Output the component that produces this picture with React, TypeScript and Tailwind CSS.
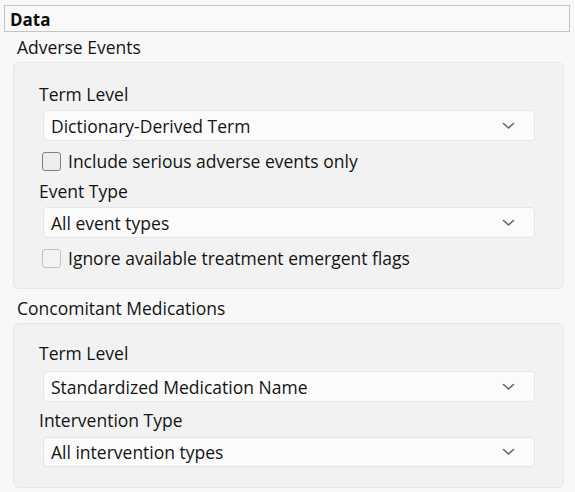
import React from "react";

const font = { fontFamily: '"Open Sans", "Noto Sans", sans-serif' };

function Chevron() {
  return (
    <svg width="13" height="8" viewBox="0 0 13 8" className="shrink-0">
      <path d="M1.5 1.5 L6.5 6 L11.5 1.5" fill="none" stroke="#666666" strokeWidth="1.6" strokeLinecap="round" strokeLinejoin="round" />
    </svg>
  );
}

function Select({ value, h = "h-[31px]" }: { value: string; h?: string }) {
  return (
    <div className={`ml-[29px] mr-[28px] ${h} rounded-[4px] border border-[#e6e6e6] bg-[#fbfbfb] flex items-center justify-between pl-[7px] pr-[19px]`}>
      <span className="text-[17.5px] text-[#141414] leading-none pt-[2px]">{value}</span>
      <Chevron />
    </div>
  );
}

function Label({ text }: { text: string }) {
  return (
    <div className="ml-[25px] h-[20px] flex items-center">
      <span className="text-[17.5px] text-[#141414] leading-none pt-[2px]">{text}</span>
    </div>
  );
}

function Check({ text, disabled }: { text: string; disabled?: boolean }) {
  return (
    <div className="ml-[28px] h-[20px] flex items-center gap-[7px]">
      <div
        className={`w-[19px] h-[19px] rounded-[3px] ${
          disabled ? "border border-[#c2c2c2] bg-[#f3f3f3]" : "border-[1.5px] border-[#808080] bg-[#ededed]"
        }`}
      />
      <span className="text-[17.5px] text-[#141414] leading-none pt-[2px]">{text}</span>
    </div>
  );
}

export default function App() {
  return (
    <div className="w-[575px] h-[492px] bg-[#f8f8f8] overflow-hidden pt-[5px]" style={font}>
      <div className="mx-[4px] w-[566px] h-[27px] border border-[#c4c4c4] bg-[#f9f9f9] flex items-center pl-[5px]">
        <span className="text-[17px] font-bold text-[#0d0d0d] leading-none pt-[2px]">Data</span>
      </div>
      <div className="ml-[17px] mt-[4px] h-[20px] flex items-center">
        <span className="text-[17.5px] text-[#141414] leading-none pt-[3px]">Adverse Events</span>
      </div>
      <div className="ml-[13px] mt-[6px] w-[551px] h-[227px] rounded-[6px] border border-[#e7e7e7] bg-[#f2f2f2] pt-[21px] flex flex-col">
        <Label text="Term Level" />
        <div className="mt-[6px]"><Select value="Dictionary-Derived Term" /></div>
        <div className="mt-[10px]"><Check text="Include serious adverse events only" /></div>
        <div className="mt-[10px]"><Label text="Event Type" /></div>
        <div className="mt-[6px]"><Select value="All event types" /></div>
        <div className="mt-[10px]"><Check text="Ignore available treatment emergent flags" disabled /></div>
      </div>
      <div className="ml-[17px] mt-[9px] h-[20px] flex items-center">
        <span className="text-[17.5px] text-[#141414] leading-none pt-[2px]">Concomitant Medications</span>
      </div>
      <div className="ml-[13px] mt-[5px] w-[551px] h-[165px] rounded-[6px] border border-[#e7e7e7] bg-[#f2f2f2] pt-[19px] flex flex-col">
        <Label text="Term Level" />
        <div className="mt-[8px]"><Select value="Standardized Medication Name" /></div>
        <div className="mt-[8px]"><Label text="Intervention Type" /></div>
        <div className="mt-[7px]"><Select value="All intervention types" h="h-[30px]" /></div>
      </div>
    </div>
  );
}
